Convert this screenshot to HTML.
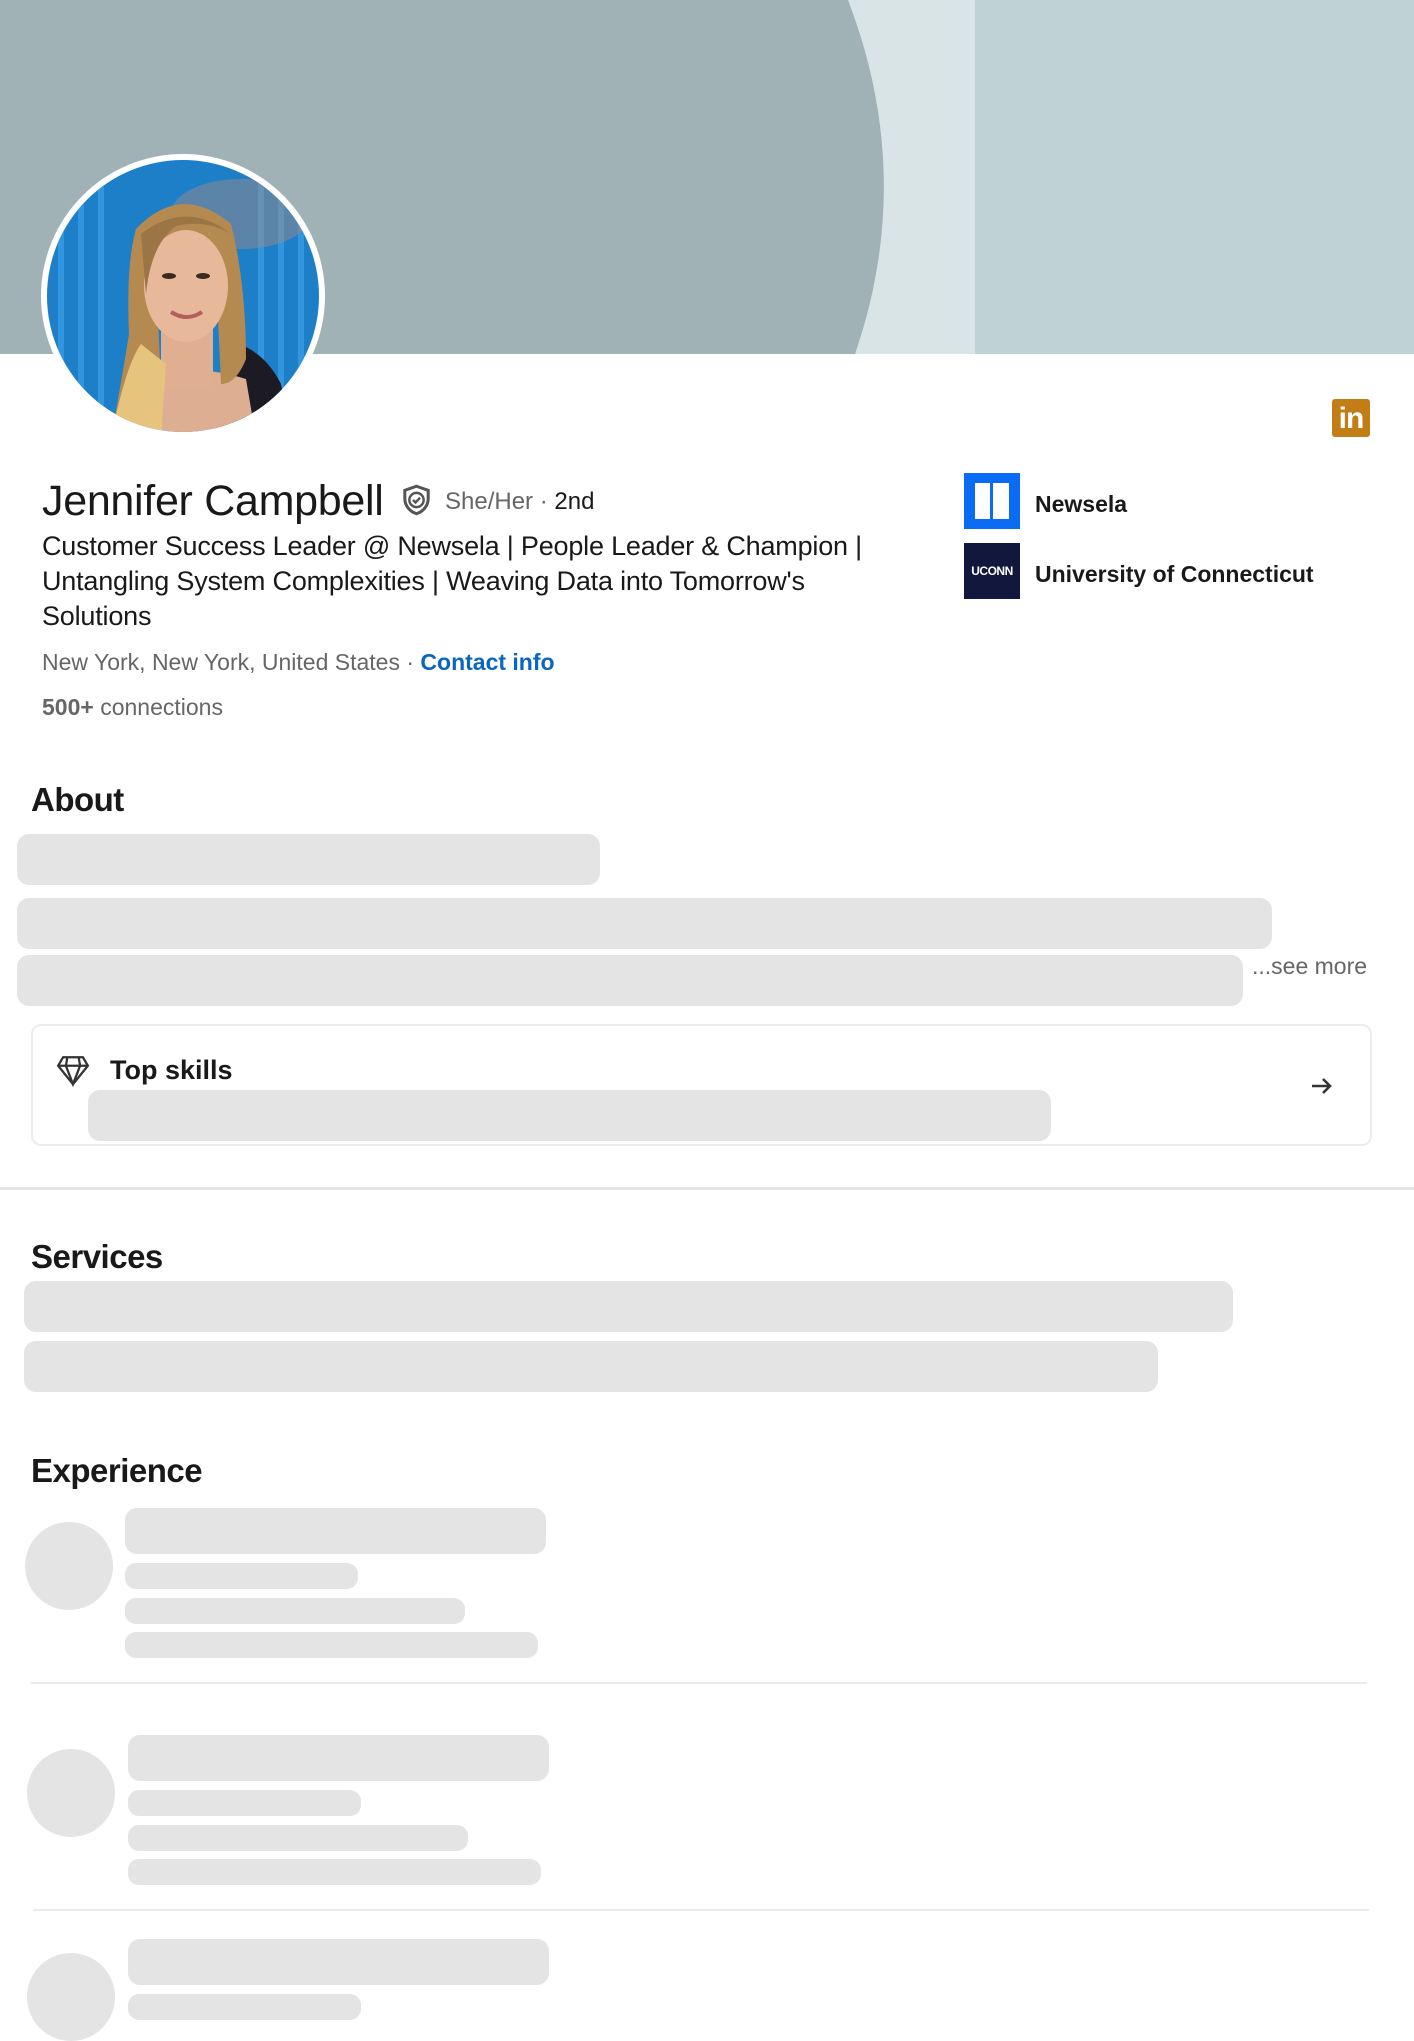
<!DOCTYPE html>
<html><head><meta charset="utf-8">
<style>
*{margin:0;padding:0;box-sizing:border-box}
body{width:1414px;height:2000px;overflow:hidden;background:#fff;font-family:"Liberation Sans",sans-serif;color:#191919;position:relative}
.a{position:absolute}
.bar{position:absolute;background:#e4e4e4;border-radius:12px}
.sb{position:absolute;background:#e4e4e4;border-radius:11px}
.circ{position:absolute;background:#e4e4e4;border-radius:50%}
.h2{position:absolute;font-size:33px;font-weight:700;left:31px;letter-spacing:-0.5px}
.hr{position:absolute;height:2px;background:#ebebeb}
</style></head><body>
<!-- banner -->
<svg class="a" style="left:0;top:0" width="1414" height="354">
<rect width="1414" height="354" fill="#bfd3d6"/>
<rect width="975" height="354" fill="#d8e4e6"/>
<path d="M0 0 H848 Q916 177 855 354 H0Z" fill="#a0b2b5"/>
</svg>
<!-- avatar -->
<svg class="a" style="left:41px;top:154px" width="284" height="284" viewBox="0 0 284 284">
<defs><clipPath id="c"><circle cx="142" cy="142" r="136"/></clipPath></defs>
<circle cx="142" cy="142" r="142" fill="#fff"/>
<g clip-path="url(#c)">
<rect width="284" height="284" fill="#1e7fc9"/>
<g stroke="#3aa0e6" stroke-width="6" opacity=".7">
<path d="M20 0V284M40 0V284M60 0V284M220 0V284M240 0V284M260 0V284"/></g>
<ellipse cx="200" cy="60" rx="70" ry="35" fill="#a88b80" opacity=".45"/>
<path d="M198 190 Q225 200 240 230 L250 284 H170Z" fill="#1c1a22"/>
<path d="M85 230 Q142 205 205 225 L215 284 H70Z" fill="#deae92"/>
<path d="M120 170 h52 v65 h-52z" fill="#e0ae90"/>
<path d="M95 75 Q140 28 190 70 Q205 130 205 205 Q195 230 180 230 L175 120 Q140 80 115 120 L120 230 Q110 284 100 284 H70 Q80 230 88 180 Q85 110 95 75Z" fill="#b48a50"/>
<path d="M70 284 Q85 210 100 190 L125 210 L120 284Z" fill="#e6c47e"/>
<ellipse cx="145" cy="132" rx="42" ry="56" fill="#e8b89a"/>
<path d="M100 80 Q145 45 190 80 Q165 65 135 72 Q110 90 105 140Z" fill="#9c7544"/>
<ellipse cx="128" cy="122" rx="7" ry="3" fill="#3a2a22"/><ellipse cx="162" cy="122" rx="7" ry="3" fill="#3a2a22"/>
<path d="M130 158 Q146 168 161 158" stroke="#b35f5f" stroke-width="4" fill="none"/>
</g></svg>
<!-- linkedin -->
<div class="a" style="left:1332px;top:399px;width:38px;height:38px;background:#c37d16;border-radius:3px;color:#fff;font-weight:700;font-size:30px;line-height:40px;text-align:center;letter-spacing:-1px">in</div>
<!-- name -->
<div class="a" style="left:42px;top:477px;font-size:43px;letter-spacing:-0.3px;white-space:nowrap">Jennifer Campbell</div>
<svg class="a" style="left:400px;top:483px" width="33" height="34" viewBox="0 0 24 24"><path d="M12 2 L20.5 5 V11 C20.5 16.5 16.5 20.5 12 22 C7.5 20.5 3.5 16.5 3.5 11 V5Z" fill="none" stroke="#555" stroke-width="2.2"/><circle cx="12" cy="12" r="5.2" fill="none" stroke="#555" stroke-width="1.8"/><path d="M9.5 12 L11.3 13.8 L14.6 10.3" fill="none" stroke="#555" stroke-width="1.8"/></svg>
<div class="a" style="left:445px;top:488px;font-size:24px;color:#666;white-space:nowrap">She/Her · <span style="color:#191919">2nd</span></div>
<div class="a" style="left:42px;top:529px;font-size:27px;line-height:35px;width:870px;letter-spacing:-0.2px">Customer Success Leader @ Newsela | People Leader &amp; Champion | Untangling System Complexities | Weaving Data into Tomorrow's Solutions</div>
<div class="a" style="left:42px;top:649px;font-size:23px;color:#666;white-space:nowrap">New York, New York, United States · <span style="color:#0a66c2;font-weight:700">Contact info</span></div>
<div class="a" style="left:42px;top:694px;font-size:23px;color:#666;white-space:nowrap"><b>500+</b> connections</div>
<!-- companies -->
<div class="a" style="left:964px;top:473px;width:56px;height:56px;background:#0a6cf5">
<div class="a" style="left:11px;top:10px;width:15px;height:36px;background:#fff"></div>
<div class="a" style="left:29px;top:10px;width:16px;height:36px;background:#fff"></div></div>
<div class="a" style="left:1035px;top:491px;font-size:23px;font-weight:700;color:#191919">Newsela</div>
<div class="a" style="left:964px;top:543px;width:56px;height:56px;background:#12183d;color:#fff;font-size:12px;font-weight:700;line-height:56px;text-align:center;letter-spacing:-0.5px">UCONN</div>
<div class="a" style="left:1035px;top:561px;font-size:23px;font-weight:700;color:#191919">University of Connecticut</div>
<!-- about -->
<div class="h2" style="top:781px">About</div>
<div class="bar" style="left:17px;top:834px;width:583px;height:51px"></div>
<div class="bar" style="left:17px;top:898px;width:1255px;height:51px"></div>
<div class="bar" style="left:17px;top:955px;width:1226px;height:51px"></div>
<div class="a" style="left:1252px;top:953px;font-size:23px;color:#666">...see more</div>
<div class="a" style="left:31px;top:1024px;width:1341px;height:122px;border:2px solid #ececec;border-radius:10px"></div>
<svg class="a" style="left:56px;top:1053px" width="34" height="34" viewBox="0 0 24 24" fill="none" stroke="#333" stroke-width="1.6"><path d="M5 3H19L22.5 9L12 22L1.5 9Z"/><path d="M1.5 9H22.5M8 3L7 9L12 22L17 9L16 3"/></svg>
<div class="a" style="left:110px;top:1055px;font-size:27px;font-weight:700;color:#191919">Top skills</div>
<div class="bar" style="left:88px;top:1090px;width:963px;height:51px"></div>
<svg class="a" style="left:1310px;top:1074px" width="24" height="24" viewBox="0 0 24 24" fill="none" stroke="#333" stroke-width="2.6"><path d="M2 12H20M13 5L20 12L13 19"/></svg>
<div class="a" style="left:0;top:1187px;width:1414px;height:3px;background:#e4e4e4"></div>
<!-- services -->
<div class="h2" style="top:1238px">Services</div>
<div class="bar" style="left:24px;top:1281px;width:1209px;height:51px"></div>
<div class="bar" style="left:24px;top:1341px;width:1134px;height:51px"></div>
<!-- experience -->
<div class="h2" style="top:1452px">Experience</div>
<div class="circ" style="left:25px;top:1522px;width:88px;height:88px"></div>
<div class="bar" style="left:125px;top:1508px;width:421px;height:46px"></div>
<div class="sb" style="left:125px;top:1563px;width:233px;height:26px"></div>
<div class="sb" style="left:125px;top:1598px;width:340px;height:26px"></div>
<div class="sb" style="left:125px;top:1632px;width:413px;height:26px"></div>
<div class="hr" style="left:31px;top:1682px;width:1336px"></div>
<div class="circ" style="left:27px;top:1749px;width:88px;height:88px"></div>
<div class="bar" style="left:128px;top:1735px;width:421px;height:46px"></div>
<div class="sb" style="left:128px;top:1790px;width:233px;height:26px"></div>
<div class="sb" style="left:128px;top:1825px;width:340px;height:26px"></div>
<div class="sb" style="left:128px;top:1859px;width:413px;height:26px"></div>
<div class="hr" style="left:33px;top:1909px;width:1336px"></div>
<div class="circ" style="left:27px;top:1953px;width:88px;height:88px"></div>
<div class="bar" style="left:128px;top:1939px;width:421px;height:46px"></div>
<div class="sb" style="left:128px;top:1994px;width:233px;height:26px"></div>
</body></html>
